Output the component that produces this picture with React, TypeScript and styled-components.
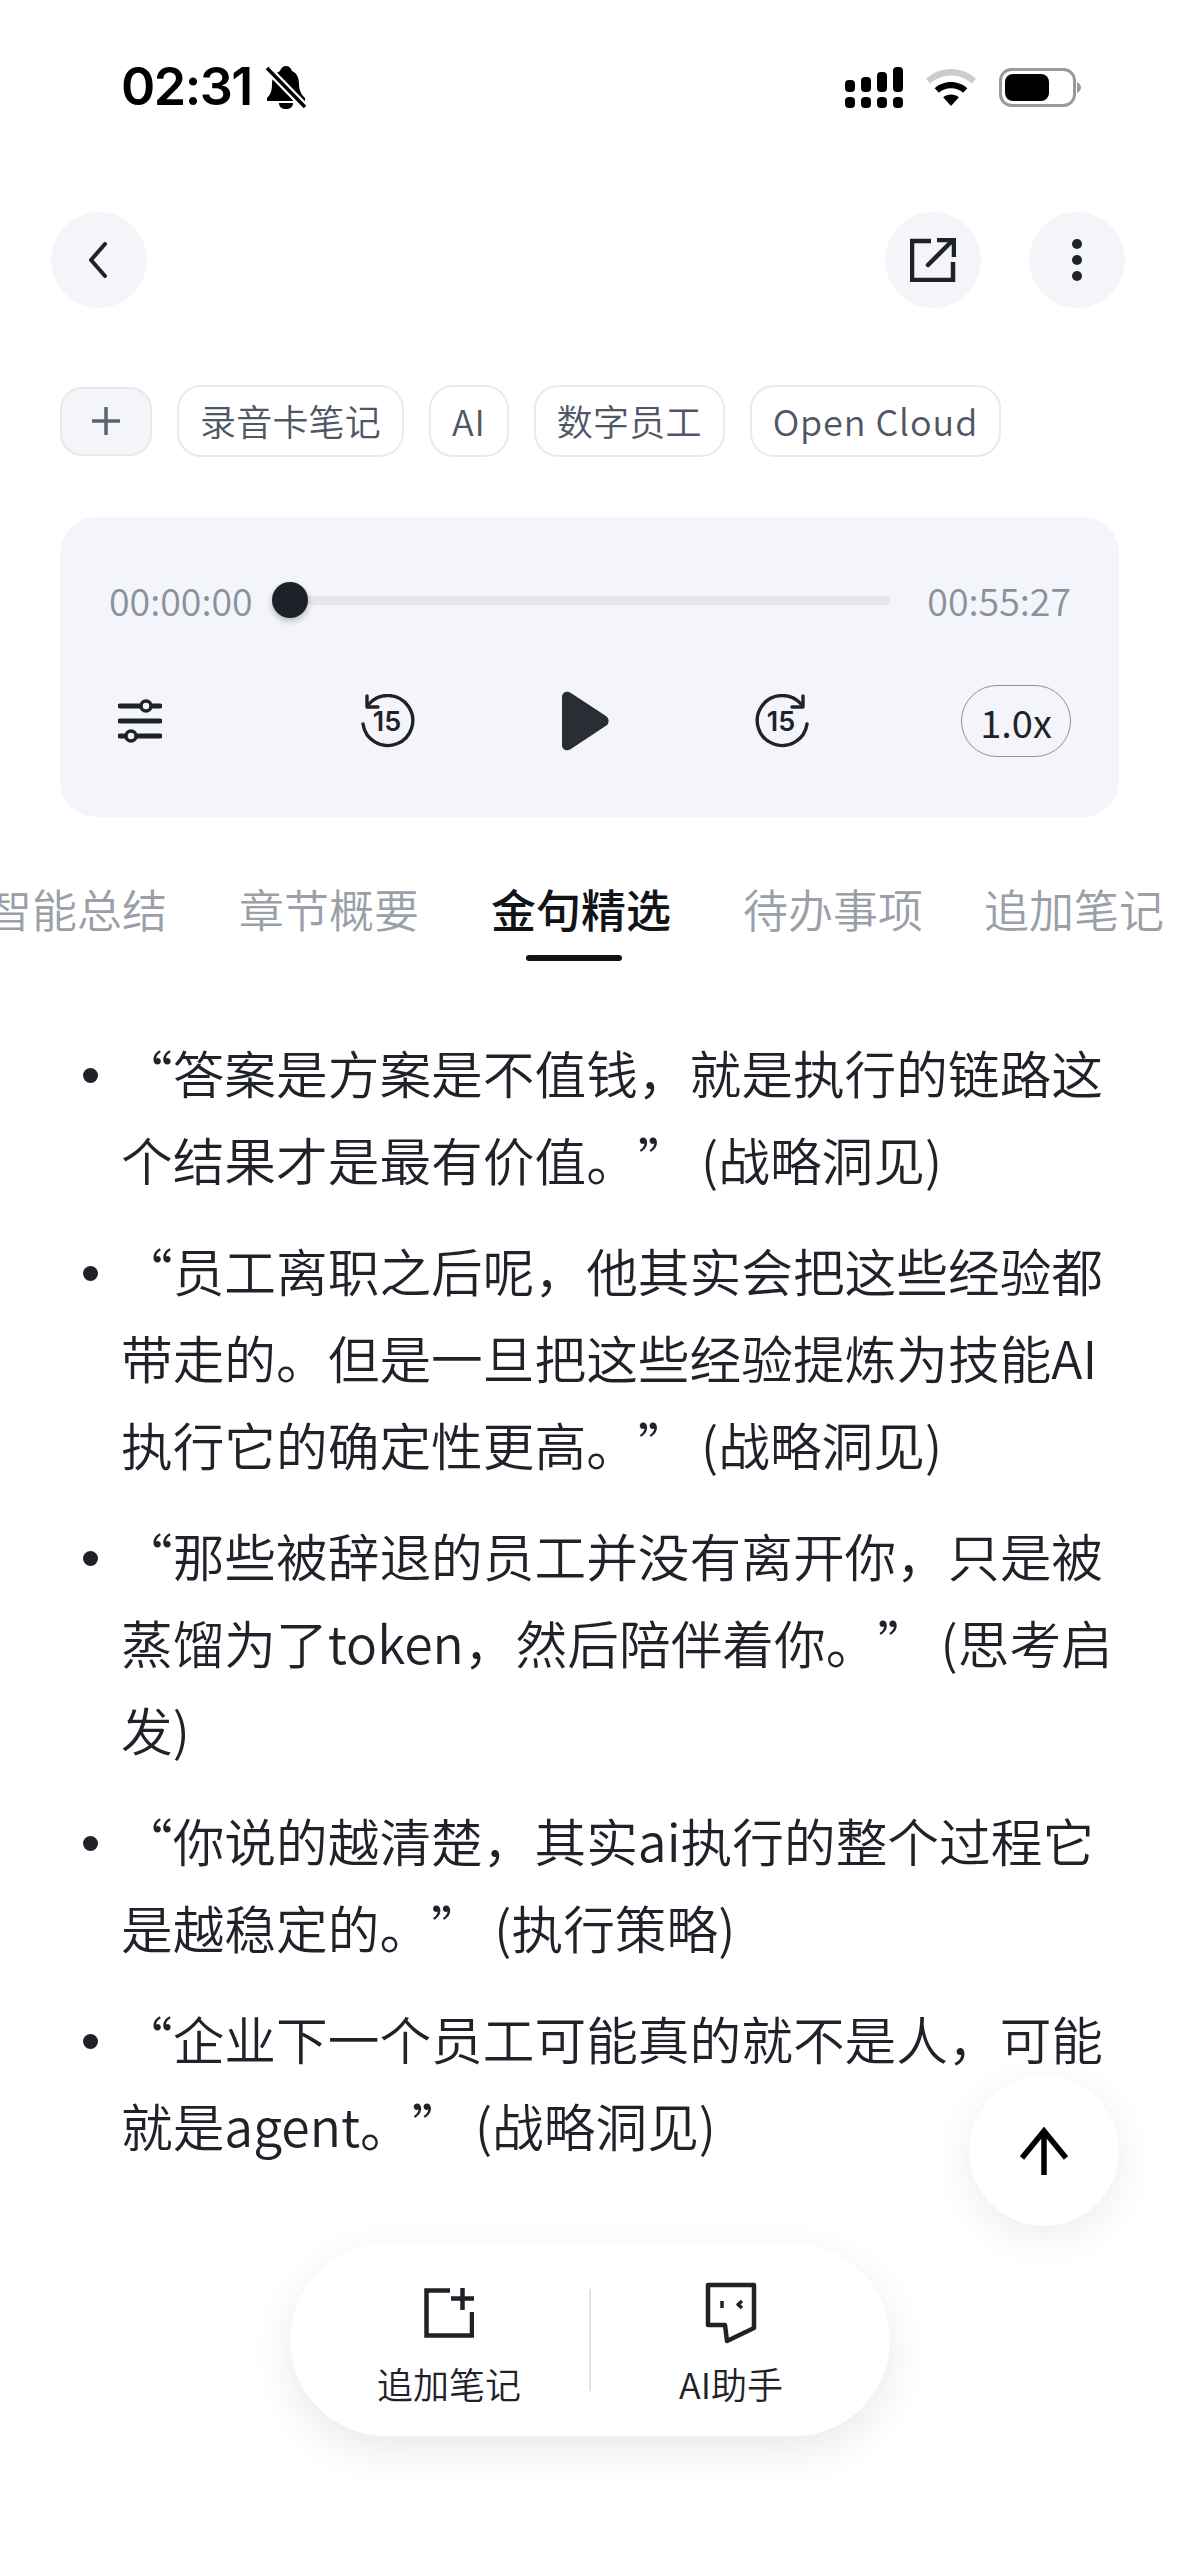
import React from "react"
import styled, { createGlobalStyle } from "styled-components"

const GlobalStyle = createGlobalStyle`
	html, body {
		margin: 0;
		padding: 0;
		background: #ffffff;
	}
	body {
		font-family: "Noto Sans CJK SC", "Noto Sans", sans-serif;
	}
`

const tags = ["录音卡笔记", "AI", "数字员工", "Open Cloud"]
const tabs = ["智能总结", "章节概要", "金句精选", "待办事项", "追加笔记"]
const quotes = [
	"“答案是方案是不值钱，就是执行的链路这个结果才是最有价值。” (战略洞见)",
	"“员工离职之后呢，他其实会把这些经验都带走的。但是一旦把这些经验提炼为技能AI执行它的确定性更高。” (战略洞见)",
	"“那些被辞退的员工并没有离开你，只是被蒸馏为了token，然后陪伴着你。” (思考启发)",
	"“你说的越清楚，其实ai执行的整个过程它是越稳定的。” (执行策略)",
	"“企业下一个员工可能真的就不是人，可能就是agent。” (战略洞见)",
]

const BellOff = () => (
	<svg width="42" height="44" viewBox="0 0 42 44">
		<path d="M21 1c3 0 5 2 6 5 5 2 7 7 7 13 0 6 2 10 6 14v3H2v-3c4-4 5-8 5-14 0-6 3-11 8-13 1-3 3-5 6-5z" fill="#000" />
		<path d="M14 38h14c0 4-3 6-7 6s-7-2-7-6z" fill="#000" />
		<path d="M3 4l36 37" stroke="#fff" strokeWidth="8" />
		<path d="M2 3l38 39" stroke="#000" strokeWidth="3.4" />
	</svg>
)

const SignalIcon = () => (
	<svg width="58" height="41" viewBox="0 0 58 41" fill="#000">
		<rect x="0" y="13" width="10" height="12" rx="4" />
		<rect x="16" y="10" width="10" height="15" rx="4" />
		<rect x="32" y="5" width="10" height="20" rx="4" />
		<rect x="48" y="0" width="10" height="25" rx="4" />
		<rect x="0" y="30" width="10" height="11" rx="4" />
		<rect x="16" y="30" width="10" height="11" rx="4" />
		<rect x="32" y="30" width="10" height="11" rx="4" />
		<rect x="48" y="30" width="10" height="11" rx="4" />
	</svg>
)

const WifiIcon = () => (
	<svg width="50" height="37" viewBox="0 0 50 37">
		<path d="M25 0c9.6 0 18.300 3.700 25 9.800l-4.200 4.700C40.200 9.500 33 6.500 25 6.500S9.800 9.500 4.200 14.500L0 9.800C6.700 3.700 15.400 0 25 0z" fill="#cccccc" />
		<path d="M25 13c6.200 0 11.900 2.300 16.300 6.200l-4.200 4.600c-3.200-2.800-7.400-4.500-12.100-4.500s-8.900 1.700-12.100 4.500l-4.200-4.600C13.100 15.300 18.800 13 25 13z" fill="#000" />
		<path d="M25 25.500c3 0 5.700 1 7.800 2.800L25 37l-7.800-8.700c2.100-1.800 4.800-2.800 7.800-2.800z" fill="#000" />
	</svg>
)

const BatteryIcon = () => (
	<svg width="82" height="39" viewBox="0 0 82 39">
		<rect x="1.500" y="1.500" width="74" height="36" rx="11" fill="none" stroke="#999999" strokeWidth="3" />
		<rect x="6" y="6" width="44" height="27" rx="8" fill="#000" />
		<path d="M78 14c2 1 4 3 4 5.500S80 24 78 25z" fill="#999999" />
	</svg>
)

const ChevronLeft = () => (
	<svg width="20" height="36" viewBox="0 0 20 36" fill="none">
		<path d="M16 2L2 18l14 16" stroke="#1f2329" strokeWidth="4" strokeLinecap="round" strokeLinejoin="round" />
	</svg>
)

const ShareIcon = () => (
	<svg width="46" height="44" viewBox="0 0 46 44" fill="none" stroke="#1f2329" strokeWidth="4.500">
		<path d="M21 3H2v39h41V24" />
		<path d="M18 27L42 3" strokeLinecap="round" />
		<path d="M27 2h17v17" />
	</svg>
)

const MoreIcon = () => (
	<svg width="12" height="44" viewBox="0 0 12 44" fill="#1f2329">
		<circle cx="6" cy="6" r="5" />
		<circle cx="6" cy="22" r="5" />
		<circle cx="6" cy="38" r="5" />
	</svg>
)

const PlusIcon = () => (
	<svg width="28" height="28" viewBox="0 0 28 28" stroke="#5b6472" strokeWidth="3.500" strokeLinecap="round">
		<path d="M14 1v26M1 14h26" />
	</svg>
)

const SlidersIcon = () => (
	<svg width="44" height="46" viewBox="0 0 44 46" fill="none" stroke="#1f2329" strokeWidth="5" strokeLinecap="round">
		<path d="M2 8h40" />
		<circle cx="28" cy="8" r="5" strokeWidth="3.500" fill="#f4f5fa" />
		<path d="M2 23h40" />
		<path d="M2 38h40" />
		<circle cx="13" cy="38" r="5" strokeWidth="3.500" fill="#f4f5fa" />
	</svg>
)

const SkipIcon = ({ flip }: { flip?: boolean }) => (
	<svg width="54" height="54" viewBox="0 0 54 54" fill="none">
		<g transform={flip ? "translate(54 0) scale(-1 1)" : undefined}>
			<path d="M2 30A25 25 0 1 0 8 10" stroke="#1f2329" strokeWidth="3.400" strokeLinecap="round" />
			<path d="M6 2v11h11" stroke="#1f2329" strokeWidth="3.400" strokeLinecap="round" strokeLinejoin="round" />
		</g>
		<text x="26" y="37" textAnchor="middle" fontSize="27" fontWeight="600" fontFamily="Inter, sans-serif" fill="#1f2329">15</text>
	</svg>
)

const PlayIcon = () => (
	<svg width="48" height="60" viewBox="0 0 48 60">
		<path d="M1 6C1 1.500 5.500-.8 9.500 1.800L45 25c3.500 2.300 3.500 7.500 0 9.800L9.500 58.200C5.500 60.800 1 58.500 1 54z" fill="#2b2d35" />
	</svg>
)

const ArrowUp = () => (
	<svg width="48" height="48" viewBox="0 0 48 48" fill="none" stroke="#000" strokeWidth="5.500">
		<path d="M24 4v44" />
		<path d="M2 31L24 4l22 27" strokeLinejoin="miter" />
	</svg>
)

const NoteAddIcon = () => (
	<svg width="50" height="50" viewBox="0 0 50 50" fill="none" stroke="#1f2329" strokeWidth="4.500">
		<path d="M26 2.500H2.500v45H48V24" />
		<path d="M38.500 0v22M27 10.500h23" />
	</svg>
)

const ChatIcon = () => (
	<svg width="52" height="62" viewBox="0 0 52 62" fill="none" stroke="#1f2329" strokeWidth="4.500" strokeLinejoin="round">
		<path d="M3 3h46v43L22 59l-2-16H3z" />
		<path d="M17 19v7" strokeWidth="3.500" />
		<path d="M37 19l-4 3.500 4 3.500" strokeWidth="3.500" />
	</svg>
)

export default function App() {
	return (
		<Page>
			<GlobalStyle />
			<StatusBar>
				<TimeGroup>
					<Clock>02:31</Clock>
					<BellOff />
				</TimeGroup>
				<StatusIcons>
					<SignalIcon />
					<WifiIcon />
					<BatteryIcon />
				</StatusIcons>
			</StatusBar>

			<Header>
				<RoundButton>
					<ChevronLeft />
				</RoundButton>
				<HeaderActions>
					<RoundButton>
						<ShareIcon />
					</RoundButton>
					<RoundButton>
						<MoreIcon />
					</RoundButton>
				</HeaderActions>
			</Header>

			<TagRow>
				<AddTag>
					<PlusIcon />
				</AddTag>
				{tags.map((t) => (
					<Tag key={t} $latin={/^[A-Za-z ]+$/.test(t)}>
						{t}
					</Tag>
				))}
			</TagRow>

			<Player>
				<Timeline>
					<TimeLabel>00:00:00</TimeLabel>
					<Track>
						<Thumb />
					</Track>
					<TimeLabel>00:55:27</TimeLabel>
				</Timeline>
				<Controls>
					<SlidersIcon />
					<TransportGroup>
						<SkipIcon />
						<PlayIcon />
						<SkipIcon flip />
					</TransportGroup>
					<SpeedButton>1.0x</SpeedButton>
				</Controls>
			</Player>

			<TabStrip>
				{tabs.map((t) => (
					<Tab key={t} $active={t === "金句精选"}>
						{t}
					</Tab>
				))}
			</TabStrip>

			<QuoteList>
				{quotes.map((q) => (
					<QuoteItem key={q}>
						<Bullet />
						<QuoteText>{q}</QuoteText>
					</QuoteItem>
				))}
			</QuoteList>

			<ScrollTop>
				<ArrowUp />
			</ScrollTop>

			<ActionPill>
				<PillAction>
					<PillIcon>
						<NoteAddIcon />
					</PillIcon>
					<PillLabel>追加笔记</PillLabel>
				</PillAction>
				<PillDivider />
				<PillAction>
					<PillIcon>
						<ChatIcon />
					</PillIcon>
					<PillLabel>AI助手</PillLabel>
				</PillAction>
			</ActionPill>
		</Page>
	)
}

const Page = styled.div`
	position: relative;
	width: 1179px;
	height: 2556px;
	overflow: hidden;
	background: #ffffff;
	color: #1f2329;
`
const StatusBar = styled.div`
	display: flex;
	justify-content: space-between;
	align-items: center;
	height: 44px;
	padding: 65px 98px 0 121px;
`
const TimeGroup = styled.div`
	display: flex;
	align-items: center;
	gap: 13px;
`
const Clock = styled.span`
	font-family: Inter, "Liberation Sans", sans-serif;
	font-size: 52px;
	font-weight: 600;
	line-height: 44px;
	letter-spacing: -1.5px;
	color: #000000;
`
const StatusIcons = styled.div`
	display: flex;
	align-items: center;
	gap: 23px;
`
const Header = styled.div`
	display: flex;
	justify-content: space-between;
	margin-top: 103px;
	padding: 0 54px 0 51px;
`
const HeaderActions = styled.div`
	display: flex;
	gap: 48px;
`
const RoundButton = styled.div`
	display: flex;
	align-items: center;
	justify-content: center;
	width: 96px;
	height: 96px;
	border-radius: 50%;
	background: #f4f5f9;
`
const TagRow = styled.div`
	display: flex;
	align-items: center;
	gap: 25px;
	margin-top: 77px;
	padding-left: 60px;
`
const AddTag = styled.div`
	display: flex;
	align-items: center;
	justify-content: center;
	box-sizing: border-box;
	width: 92px;
	height: 69px;
	border: 2px solid #e6e8ec;
	border-radius: 22px;
	background: #f4f5f9;
`
const Tag = styled.div<{ $latin?: boolean }>`
	display: flex;
	align-items: center;
	box-sizing: border-box;
	height: 72px;
	padding: 0 21px 3px;
	border: 2px solid #e8eaee;
	border-radius: 24px;
	background: #ffffff;
	font-size: 36px;
	font-weight: 350;
	letter-spacing: ${(p) => (p.$latin ? "0.9px" : "0.2px")};
	color: #4f5765;
`
const Player = styled.div`
	box-sizing: border-box;
	width: 1059px;
	height: 300px;
	margin: 60px 0 0 60px;
	padding: 58px 48px 0 49px;
	border-radius: 36px;
	background: #f4f5fa;
`
const Timeline = styled.div`
	display: flex;
	align-items: center;
	gap: 37px;
	height: 50px;
`
const TimeLabel = styled.span`
	font-size: 37.500px;
	line-height: 50px;
	font-weight: 350;
	color: #8a919e;
`
const Track = styled.div`
	position: relative;
	flex: 1;
	height: 9px;
	border-radius: 5px;
	background: #e5e6ea;
`
const Thumb = styled.div`
	position: absolute;
	left: -18px;
	top: -13.5px;
	width: 36px;
	height: 36px;
	border-radius: 50%;
	background: #1f2129;
	box-shadow: 0 3px 6px rgba(0, 0, 0, 0.25);
`
const Controls = styled.div`
	display: flex;
	align-items: center;
	justify-content: space-between;
	height: 72px;
	margin-top: 60px;
	padding-left: 9px;
`
const TransportGroup = styled.div`
	display: flex;
	align-items: center;
	gap: 146px;
	margin-left: 46px;
`
const SpeedButton = styled.div`
	display: flex;
	align-items: center;
	justify-content: center;
	box-sizing: border-box;
	width: 110px;
	height: 72px;
	border: 1.500px solid #8b909a;
	border-radius: 36px;
	font-size: 38px;
	font-weight: 400;
	color: #1f2329;
`
const TabStrip = styled.div`
	display: flex;
	gap: 72px;
	margin: 60px 0 0 -13px;
	white-space: nowrap;
`
const Tab = styled.div<{ $active?: boolean }>`
	position: relative;
	flex: none;
	font-size: 45px;
	line-height: 64px;
	font-weight: ${(p) => (p.$active ? 500 : 350)};
	color: ${(p) => (p.$active ? "#111317" : "#9a9fa8")};

	&:last-child {
		margin-left: -11px;
	}

	${(p) =>
		p.$active &&
		`
		&::after {
			content: "";
			position: absolute;
			left: 35px;
			bottom: -20px;
			width: 96px;
			height: 6px;
			border-radius: 3px;
			background: #111317;
		}
	`}
`
const QuoteList = styled.ul`
	list-style: none;
	margin: 87px 0 0;
	padding: 0 60px 0 83px;
`
const QuoteItem = styled.li`
	display: flex;
	gap: 23px;
	margin-bottom: 24px;
`
const Bullet = styled.span`
	flex: none;
	width: 15px;
	height: 15px;
	margin-top: 40px;
	border-radius: 50%;
	background: #1f2329;
`
const QuoteText = styled.p`
	margin: 0;
	font-size: 51.7px;
	line-height: 87px;
	font-weight: 350;
	text-spacing-trim: space-all;
	color: #1f2329;
`
const ScrollTop = styled.div`
	position: absolute;
	left: 969px;
	top: 2076px;
	display: flex;
	align-items: center;
	justify-content: center;
	width: 150px;
	height: 150px;
	border-radius: 50%;
	background: #ffffff;
	box-shadow: 0 10px 40px rgba(0, 0, 0, 0.08);
`
const ActionPill = styled.div`
	position: absolute;
	left: 290px;
	top: 2244px;
	display: flex;
	align-items: center;
	justify-content: center;
	box-sizing: border-box;
	width: 600px;
	height: 192px;
	border-radius: 96px;
	background: #ffffff;
	box-shadow: 0 14px 44px rgba(0, 0, 0, 0.09);
`
const PillAction = styled.div`
	display: flex;
	flex-direction: column;
	align-items: center;
	width: 280px;
	padding-top: 8px;
`
const PillIcon = styled.div`
	display: flex;
	align-items: center;
	justify-content: center;
	height: 66px;
	margin-bottom: 12px;
`
const PillLabel = styled.span`
	font-size: 36px;
	line-height: 50px;
	font-weight: 350;
	color: #1f2329;
`
const PillDivider = styled.div`
	width: 2px;
	height: 102px;
	background: #e4e4e4;
`
